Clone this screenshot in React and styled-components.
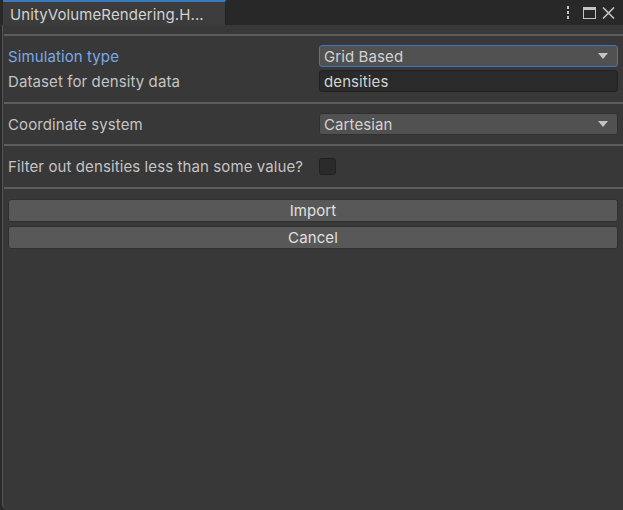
import React from 'react'
import styled, { createGlobalStyle } from 'styled-components'

const Global = createGlobalStyle`
  html, body { margin: 0; padding: 0; background: #2a2a2a; }
  body { font-family: Inter, "Noto Sans", sans-serif; }
`

const Window = styled.div`
  width: 623px;
  height: 510px;
  display: flex;
  flex-direction: column;
  background: #2a2a2a;
`

const Header = styled.div`
  height: 25px;
  display: flex;
  align-items: stretch;
  background: #282828;
  padding-left: 3px;
`

const Tab = styled.div`
  width: 223px;
  box-sizing: border-box;
  background: #3c3c3c;
  border-top: 2px solid #3a79bb;
  border-right: 1px solid #232323;
  color: #d2d2d2;
  font-size: 15px;
  letter-spacing: 0.1px;
  padding: 1px 0 0 7px;
  display: flex;
  align-items: center;
  white-space: nowrap;
`

const Tools = styled.div`
  margin-left: auto;
  display: flex;
  align-items: center;
  padding-right: 8px;
`

const ToolIcon = styled.div`
  display: flex;
  margin-left: ${p => p.gap || 0}px;
`

const Body = styled.div`
  flex: 1;
  margin-left: 2px;
  background: #383838;
  border-left: 1px solid #555;
  border-bottom-left-radius: 6px;
  padding: 9px 0 0 1px;
`

const Separator = styled.div`
  height: 2px;
  background: #5d5d5d;
`

const Section = styled.div`
  display: flex;
  flex-direction: column;
  gap: ${p => p.gap || 3}px;
  padding: ${p => p.top || 9}px 5px ${p => p.bottom || 10}px 4px;
`

const Row = styled.div`
  display: flex;
  align-items: center;
  height: 22px;
`

const Label = styled.div`
  width: 311px;
  color: ${p => (p.focused ? '#7aa9e6' : '#c4c4c4')};
  font-size: 15px;
  letter-spacing: 0.1px;
  white-space: nowrap;
`

const Dropdown = styled.div`
  flex: 1;
  height: 22px;
  box-sizing: border-box;
  background: #515151;
  border: 1px solid ${p => (p.focused ? '#3a79bb' : '#303030')};
  border-radius: 3px;
  display: flex;
  align-items: center;
  padding: 0 9px 0 4px;
  color: #d2d2d2;
  font-size: 15px;
  letter-spacing: 0.1px;
`

const Arrow = styled.div`
  margin-left: auto;
  width: 0;
  height: 0;
  border-left: 5px solid transparent;
  border-right: 5px solid transparent;
  border-top: 6px solid #c4c4c4;
`

const TextField = styled.div`
  flex: 1;
  height: 22px;
  box-sizing: border-box;
  background: #2a2a2a;
  border: 1px solid #212121;
  border-radius: 3px;
  display: flex;
  align-items: center;
  padding: 0 4px;
  color: #d2d2d2;
  font-size: 15px;
  letter-spacing: 0.1px;
`

const Checkbox = styled.div`
  width: 17px;
  height: 17px;
  box-sizing: border-box;
  background: #2a2a2a;
  border: 1px solid #212121;
  border-radius: 3px;
`

const Button = styled.div`
  height: 23px;
  box-sizing: border-box;
  background: #585858;
  border: 1px solid #303030;
  border-radius: 3px;
  display: flex;
  align-items: center;
  justify-content: center;
  color: #e0e0e0;
  font-size: 15px;
  letter-spacing: 0.1px;
`

const Kebab = () => (
  <svg width="4" height="13" viewBox="0 0 4 13">
    <rect x="1" y="0" width="2" height="3" fill="#c4c4c4" />
    <rect x="1" y="5" width="2" height="3" fill="#c4c4c4" />
    <rect x="1" y="10" width="2" height="3" fill="#c4c4c4" />
  </svg>
)

const Maximize = () => (
  <svg width="13" height="12" viewBox="0 0 13 12">
    <rect x="0.5" y="0.5" width="12" height="11" fill="none" stroke="#c4c4c4" />
    <rect x="0" y="0" width="13" height="3" fill="#c4c4c4" />
  </svg>
)

const Close = () => (
  <svg width="13" height="12" viewBox="0 0 13 12">
    <path d="M1 0.5 L12 11.5 M12 0.5 L1 11.5" stroke="#c4c4c4" strokeWidth="1.6" />
  </svg>
)

export default function App() {
  return (
    <>
      <Global />
      <Window>
        <Header>
          <Tab>UnityVolumeRendering.H...</Tab>
          <Tools>
            <ToolIcon><Kebab /></ToolIcon>
            <ToolIcon gap={13}><Maximize /></ToolIcon>
            <ToolIcon gap={6}><Close /></ToolIcon>
          </Tools>
        </Header>
        <Body>
          <Separator />
          <Section>
            <Row>
              <Label focused>Simulation type</Label>
              <Dropdown focused>
                Grid Based
                <Arrow />
              </Dropdown>
            </Row>
            <Row>
              <Label>Dataset for density data</Label>
              <TextField>densities</TextField>
            </Row>
          </Section>
          <Separator />
          <Section bottom={9}>
            <Row>
              <Label>Coordinate system</Label>
              <Dropdown>
                Cartesian
                <Arrow />
              </Dropdown>
            </Row>
          </Section>
          <Separator />
          <Section>
            <Row>
              <Label>Filter out densities less than some value?</Label>
              <Checkbox />
            </Row>
          </Section>
          <Separator />
          <Section top={10} gap={4}>
            <Button>Import</Button>
            <Button>Cancel</Button>
          </Section>
        </Body>
      </Window>
    </>
  )
}
